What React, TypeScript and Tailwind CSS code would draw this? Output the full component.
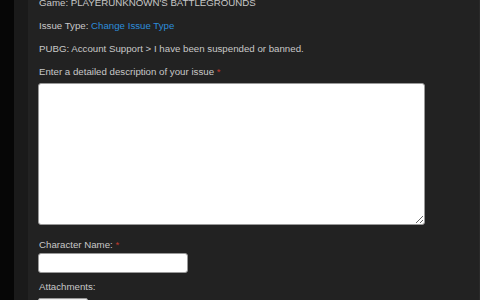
export default function App() {
  return (
    <div className="flex h-[300px] w-[480px] overflow-hidden bg-[#222] font-['Liberation_Sans',Arial,sans-serif] text-[9.7px] text-[#c8c8c8]">
      <div className="w-[14px] shrink-0 bg-[#060606]" />
      <div className="w-[14px] shrink-0 bg-[#1a1a1a]" />
      <div className="flex-1 pl-[11px] pt-0">
        <p className="-mt-[4px] leading-[14px]">Game: PLAYERUNKNOWN'S BATTLEGROUNDS</p>
        <p className="mt-[9px] leading-[14px]">
          Issue Type: <a className="text-[#2d8ddb]" href="#">Change Issue Type</a>
        </p>
        <p className="mt-[9px] leading-[14px]">PUBG: Account Support &gt; I have been suspended or banned.</p>
        <p className="mt-[9px] leading-[14px]">
          Enter a detailed description of your issue <span className="text-[#c0392b]">*</span>
        </p>
        <textarea className="mt-[4px] -ml-[1px] block h-[142px] w-[387px] rounded-[3px] border border-[#999] bg-white" />
        <p className="mt-[13px] leading-[14px]">
          Character Name: <span className="text-[#c0392b]">*</span>
        </p>
        <input className="mt-[1px] -ml-[1px] block h-[20px] w-[150px] rounded-[3px] border border-[#999] bg-white" />
        <p className="mt-[7px] leading-[14px]">Attachments:</p>
        <div className="mt-[4px] -ml-[1px] h-[12px] w-[50px] rounded-[2px] border border-[#999] bg-[#eee]" />
      </div>
      <div className="w-[1px] shrink-0 bg-[#2a2a2a]" />
    </div>
  );
}
